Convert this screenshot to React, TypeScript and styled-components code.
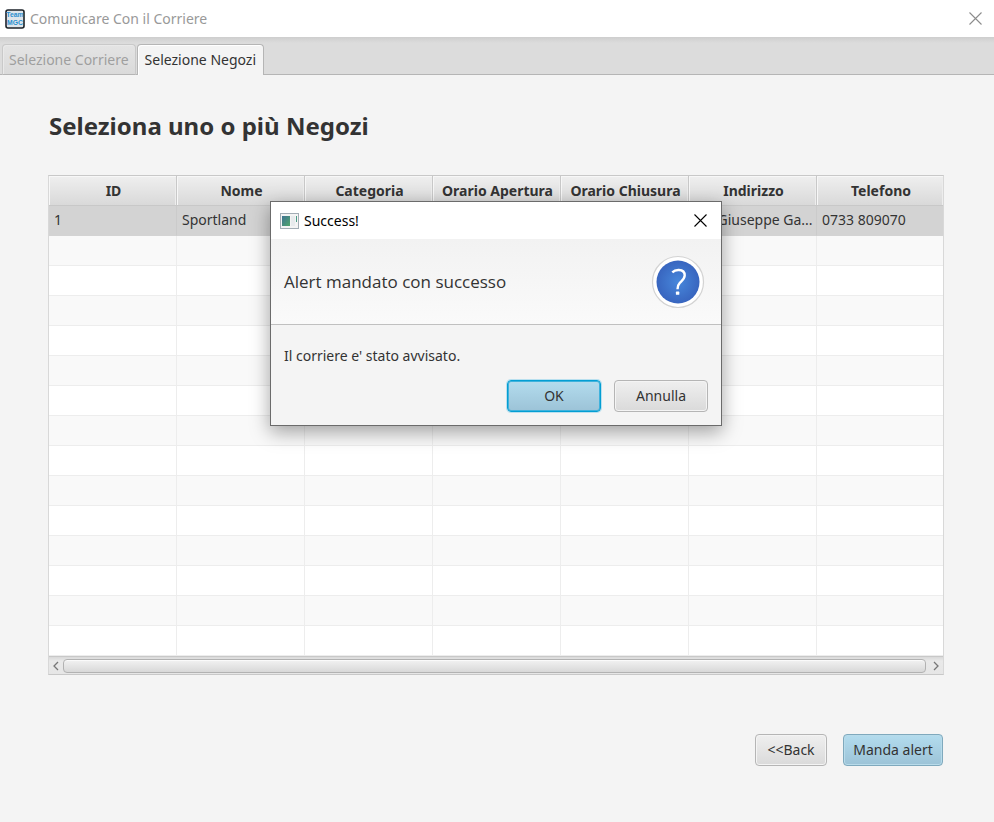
import React from "react";
import styled, { createGlobalStyle } from "styled-components";

const GlobalStyle = createGlobalStyle`
  * { box-sizing: border-box; }
  body {
    margin: 0;
    background: #f4f4f4;
    color: #333;
    font-family: "Noto Sans", "Open Sans", sans-serif;
    font-size: 14px;
    line-height: 20px;
  }
  button { font: inherit; color: inherit; }
`;

const Window = styled.div`
  position: relative;
  min-height: 100vh;
  display: flex;
  flex-direction: column;
`;

const TitleBar = styled.header<{ $active?: boolean }>`
  display: flex;
  align-items: center;
  gap: 5px;
  height: 37px;
  padding: 0 5px;
  background: #fff;
  color: ${(p) => (p.$active ? "#000" : "#999")};
`;

const WindowTitle = styled.span`
  flex: 1;
`;

const CloseButton = styled.button`
  display: flex;
  align-items: center;
  justify-content: center;
  width: 28px;
  height: 28px;
  padding: 0;
  border: 0;
  background: transparent;
`;

const TabBar = styled.div`
  display: flex;
  align-items: flex-end;
  gap: 1px;
  height: 38px;
  padding: 0 2px;
  background: linear-gradient(#cecece, #dcdcdc 6px, #dcdcdc);
  box-shadow: inset 0 -1px #b5b5b5;
`;

const Tab = styled.button<{ $selected?: boolean }>`
  height: 31px;
  padding: 0 ${(p) => (p.$selected ? 7 : 6)}px;
  border: 1px solid ${(p) => (p.$selected ? "#b5b5b5" : "#c9c9c9")};
  border-bottom: ${(p) => (p.$selected ? "0" : "1px solid #b5b5b5")};
  border-radius: 4px 4px 0 0;
  background: ${(p) => (p.$selected ? "#f4f4f4" : "linear-gradient(#e4e4e4, #dadada)")};
  box-shadow: ${(p) => (p.$selected ? "inset 1px 1px #fff" : "inset 1px 1px #e9e9e9")};
  color: ${(p) => (p.$selected ? "#333" : "#9f9f9f")};
`;

const Page = styled.main`
  padding: 35px 50px 56px 48px;
`;

const Heading = styled.h1`
  margin: 0 0 33px;
  padding: 0 1px;
  font-size: 24px;
  line-height: 32px;
  font-weight: 700;
`;

const TableBox = styled.div`
  border: 1px solid #c8c8c8;
  border-left-color: #d8d8d8;
  border-right-color: #d8d8d8;
  background: #fff;
`;

const Table = styled.table`
  width: 100%;
  table-layout: fixed;
  border-collapse: separate;
  border-spacing: 0;
`;

const HeadCell = styled.th`
  width: 128px;
  height: 30px;
  padding: 0 0 0 2px;
  border-right: 1px solid #c8c8c8;
  border-bottom: 1px solid #c8c8c8;
  background: linear-gradient(#efefef, #d9d9d9);
  box-shadow: inset 1px 1px #f7f7f7, inset -1px 0 #ededed;
  font-weight: 700;
  white-space: nowrap;

  &:last-child {
    width: auto;
    border-right: 0;
  }
`;

const Row = styled.tr<{ $selected?: boolean }>`
  background: ${(p) => (p.$selected ? "#d3d3d3" : "#fff")};

  &:nth-child(even) {
    background: #f9f9f9;
  }
`;

const Cell = styled.td<{ $selected?: boolean }>`
  height: 30px;
  padding: 0 5px 2px;
  border-right: 1px solid ${(p) => (p.$selected ? "#cbcbcb" : "#ededed")};
  border-bottom: 1px solid ${(p) => (p.$selected ? "#d3d3d3" : "#ededed")};
  overflow: hidden;
  white-space: nowrap;

  &:last-child {
    border-right: 0;
  }
`;

const ScrollBar = styled.div`
  display: flex;
  align-items: center;
  height: 18px;
  border-top: 1px solid #c8c8c8;
  background: linear-gradient(#d9d9d9, #e9e9e9 4px, #e6e6e6);
`;

const ScrollArrow = styled.button`
  display: flex;
  align-items: center;
  justify-content: center;
  width: 14px;
  height: 16px;
  padding: 0;
  border: 0;
  background: transparent;
`;

const ScrollThumb = styled.div`
  flex: 1;
  height: 14px;
  margin-right: 3px;
  border: 1px solid #b2b2b2;
  border-radius: 4px;
  background: linear-gradient(#f2f2f2, #d8d8d8);
  box-shadow: inset 0 1px #fafafa;
`;

const Actions = styled.div`
  display: flex;
  justify-content: flex-end;
  gap: 16px;
  margin-top: 59px;
  padding: 0 1px;
`;

type Tone = "plain" | "primary" | "focused";

const borders: Record<Tone, string> = {
  plain: "#b5b5b5",
  primary: "#7fa9bd",
  focused: "#039ed3",
};

const Button = styled.button<{ $tone?: Tone; $width?: number }>`
  width: ${(p) => (p.$width ? `${p.$width}px` : "auto")};
  height: 32px;
  padding: 0 8px;
  border: 1px solid ${(p) => borders[p.$tone ?? "plain"]};
  border-radius: 4px;
  background: ${(p) =>
    (p.$tone ?? "plain") === "plain"
      ? "linear-gradient(#efefef, #dadada)"
      : "linear-gradient(#b3dcee, #9cc3d7)"};
  box-shadow: ${(p) =>
    p.$tone === "focused"
      ? "inset 0 0 0 1px #3fb2dc, 0 0 0 1px #b9e0ef"
      : p.$tone === "primary"
        ? "inset 0 0 0 1px #b8dbea"
        : "inset 0 0 0 1px #f4f4f4"};
  white-space: nowrap;
`;

const Overlay = styled.div`
  position: absolute;
  inset: 0;
  display: flex;
  justify-content: center;
  align-items: flex-start;
  padding: 201px 2px 0 0;
`;

const Dialog = styled.section`
  width: 452px;
  border: 1px solid #6b6b6b;
  background: #f4f4f4;
  box-shadow: 0 6px 18px rgba(0, 0, 0, 0.36);
`;

const DialogBar = styled(TitleBar)`
  padding: 0 7px 0 9px;
`;

const DialogHeader = styled.div`
  display: flex;
  align-items: center;
  justify-content: space-between;
  height: 86px;
  padding: 0 16px 0 13px;
  border-bottom: 1px solid #c0c0c0;
  background: linear-gradient(#f2f2f2, #fafafa);
  font-family: "Open Sans", "Noto Sans", sans-serif;
  font-size: 17px;
  line-height: 24px;
`;

const DialogText = styled.p`
  margin: 0;
  padding: 21px 13px 14px;
`;

const DialogActions = styled.div`
  display: flex;
  justify-content: flex-end;
  gap: 13px;
  padding: 0 13px 13px;
`;

const AppLogo = () => (
  <svg width="20" height="20" viewBox="0 0 20 20" aria-hidden="true">
    <rect x="1" y="1" width="18" height="18" rx="2" fill="#dfe5ea" stroke="#1c2228" strokeWidth="1.6" />
    <g fill="#2a8fd0" fontFamily="Liberation Sans, sans-serif" fontWeight="700" fontSize="6.8" textAnchor="middle">
      <text x="10" y="8.4">Team</text>
      <text x="10" y="15.9">MGC</text>
    </g>
  </svg>
);

const DialogLogo = () => (
  <svg width="19" height="16" viewBox="0 0 19 16" aria-hidden="true">
    <defs>
      <linearGradient id="pane" x1="0" y1="0" x2="1" y2="1">
        <stop offset="0" stopColor="#3f7392" />
        <stop offset="1" stopColor="#4fa66c" />
      </linearGradient>
    </defs>
    <rect x="0.5" y="0.5" width="18" height="15" fill="#f4f4f4" stroke="#a3adb5" />
    <rect x="2" y="3" width="8" height="10" fill="url(#pane)" />
    <rect x="11" y="3" width="4" height="10" fill="#e8ebed" />
    <rect x="16" y="3" width="1" height="6" fill="#4c9c86" />
  </svg>
);

const CloseIcon = ({ color }: { color: string }) => (
  <svg width="13" height="13" viewBox="0 0 13 13" aria-hidden="true">
    <path d="M0.5 0.5 12.5 12.5M12.5 0.5 0.5 12.5" stroke={color} strokeWidth="1.1" fill="none" />
  </svg>
);

const Chevron = ({ right }: { right?: boolean }) => (
  <svg width="6" height="10" viewBox="0 0 6 10" aria-hidden="true">
    <path d={right ? "M1 1 5 5 1 9" : "M5 1 1 5 5 9"} stroke="#777" strokeWidth="1.3" fill="none" />
  </svg>
);

const QuestionIcon = () => (
  <svg width="54" height="54" viewBox="0 0 54 54" aria-hidden="true">
    <defs>
      <radialGradient id="disc">
        <stop offset="0" stopColor="#4787db" />
        <stop offset="1" stopColor="#3865bf" />
      </radialGradient>
    </defs>
    <circle cx="27" cy="27" r="25.5" fill="#fff" stroke="#d3d3d3" strokeWidth="1.2" />
    <circle cx="27" cy="27" r="21.5" fill="url(#disc)" />
    <path
      d="M21.3 17.3C23 15.6 25.3 14.9 27.8 15C31.6 15.2 33.8 17.3 33.7 20.5C33.6 23.8 31.2 25.5 29 27.6C27.1 29.5 26.5 31 26.5 34.2"
      fill="none"
      stroke="#fff"
      strokeWidth="2.4"
    />
    <rect x="24.9" y="36.6" width="3.4" height="3.2" rx="0.6" fill="#fff" />
  </svg>
);

const columns = ["ID", "Nome", "Categoria", "Orario Apertura", "Orario Chiusura", "Indirizzo", "Telefono"];
const shops = [["1", "Sportland", "", "", "", "Via Giuseppe Ga...", "0733 809070"]];
const rows = Array.from({ length: 15 }, (_, i) => shops[i] ?? columns.map(() => ""));

export default function App() {
  return (
    <>
      <GlobalStyle />
      <Window>
        <TitleBar>
          <AppLogo />
          <WindowTitle>Comunicare Con il Corriere</WindowTitle>
          <CloseButton aria-label="Chiudi">
            <CloseIcon color="#8c8c8c" />
          </CloseButton>
        </TitleBar>
        <TabBar role="tablist">
          <Tab role="tab" aria-selected={false} disabled>
            Selezione Corriere
          </Tab>
          <Tab role="tab" aria-selected $selected>
            Selezione Negozi
          </Tab>
        </TabBar>
        <Page>
          <Heading>Seleziona uno o più Negozi</Heading>
          <TableBox>
            <Table>
              <thead>
                <tr>
                  {columns.map((name) => (
                    <HeadCell key={name} scope="col">
                      {name}
                    </HeadCell>
                  ))}
                </tr>
              </thead>
              <tbody>
                {rows.map((cells, r) => (
                  <Row key={r} $selected={r === 0}>
                    {cells.map((text, c) => (
                      <Cell key={c} $selected={r === 0}>
                        {text}
                      </Cell>
                    ))}
                  </Row>
                ))}
              </tbody>
            </Table>
            <ScrollBar>
              <ScrollArrow aria-label="Scorri a sinistra">
                <Chevron />
              </ScrollArrow>
              <ScrollThumb />
              <ScrollArrow aria-label="Scorri a destra">
                <Chevron right />
              </ScrollArrow>
            </ScrollBar>
          </TableBox>
          <Actions>
            <Button $width={72}>&lt;&lt;Back</Button>
            <Button $tone="primary" $width={100}>
              Manda alert
            </Button>
          </Actions>
        </Page>
        <Overlay>
          <Dialog role="dialog" aria-label="Success!">
            <DialogBar $active>
              <DialogLogo />
              <WindowTitle>Success!</WindowTitle>
              <CloseButton aria-label="Chiudi">
                <CloseIcon color="#000" />
              </CloseButton>
            </DialogBar>
            <DialogHeader>
              Alert mandato con successo
              <QuestionIcon />
            </DialogHeader>
            <DialogText>Il corriere e' stato avvisato.</DialogText>
            <DialogActions>
              <Button $tone="focused" $width={94}>
                OK
              </Button>
              <Button $width={94}>Annulla</Button>
            </DialogActions>
          </Dialog>
        </Overlay>
      </Window>
    </>
  );
}
